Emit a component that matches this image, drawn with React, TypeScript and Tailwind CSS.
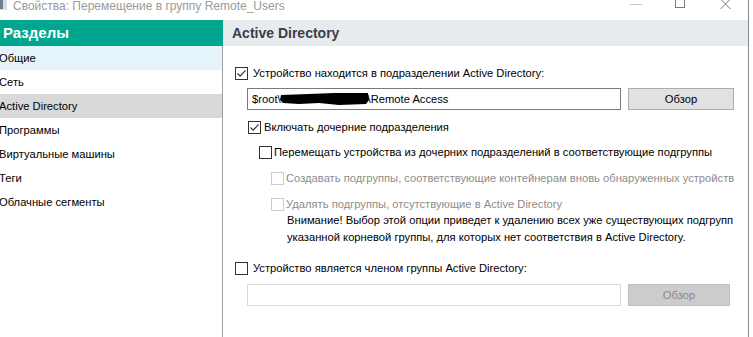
import React from "react";

function Check({ checked, disabled }: { checked?: boolean; disabled?: boolean }) {
  return (
    <span
      className={`flex h-[13px] w-[13px] shrink-0 items-center justify-center border bg-white ${
        disabled ? "border-[#cccccc]" : "border-[#333333]"
      }`}
    >
      {checked && (
        <svg width="11" height="11" viewBox="0 0 11 11">
          <path d="M1.5 5.5 L4.2 8.2 L9.5 2.3" fill="none" stroke="#333" strokeWidth="1.1" />
        </svg>
      )}
    </span>
  );
}

const sections = [
  { label: "Общие", bg: "bg-[#e5f3fb]" },
  { label: "Сеть", bg: "" },
  { label: "Active Directory", bg: "bg-[#d9d9d9]" },
  { label: "Программы", bg: "" },
  { label: "Виртуальные машины", bg: "" },
  { label: "Теги", bg: "" },
  { label: "Облачные сегменты", bg: "" },
];

export default function App() {
  return (
    <div className="h-[337px] w-[753px] overflow-hidden bg-white font-['Liberation_Sans',Arial,sans-serif] text-[11.2px] text-black">
      <div className="flex h-full w-[749px] flex-col border-r border-[#8a8a8a]">
        {/* title bar */}
        <div className="flex h-[20px] shrink-0 items-start">
          <svg width="7" height="11" viewBox="0 0 7 11" className="-mt-px">
            <rect x="0" y="0" width="7" height="11" fill="#d7dde3" />
            <rect x="0" y="1" width="3" height="9" fill="#6e7d8c" />
          </svg>
          <span className="-mt-px ml-[6px] text-[12px] leading-[14px] text-[#9a9a9a]">
            Свойства: Перемещение в группу Remote_Users
          </span>
          <div className="ml-auto flex items-start">
            <span className="mt-[4px] h-px w-[12px] bg-[#c8c8c8]" />
            <span className="-mt-px ml-[33px] h-[9px] w-[10px] border border-[#7a7a7a]" />
            <svg width="11" height="10" viewBox="0 0 11 10" className="-mt-px ml-[35px] mr-[17px]">
              <path d="M0.5 0 L10.5 10 M10.5 0 L0.5 10" stroke="#7a7a7a" strokeWidth="1" />
            </svg>
          </div>
        </div>

        {/* header */}
        <div className="flex h-[26px] shrink-0">
          <div className="flex w-[223px] items-center bg-[#00a78e] pl-[3px] text-[15px] font-bold text-white">
            Разделы
          </div>
          <div className="flex flex-1 items-center bg-[#e6ebed] pl-[9px] text-[14px] font-bold text-[#3c3d47]">
            Active Directory
          </div>
        </div>

        <div className="flex min-h-0 flex-1">
          {/* sections list */}
          <div className="w-[223px] shrink-0 border-r border-[#a0a0a0]">
            {sections.map((s) => (
              <div key={s.label} className={`flex h-[24px] items-center -ml-px ${s.bg}`}>
                {s.label}
              </div>
            ))}
          </div>

          {/* content */}
          <div className="flex flex-1 flex-col pl-[12px] pt-px">
            <label className="mt-[18px] flex h-[16px] items-center gap-[5px]">
              <Check checked />
              <span>Устройство находится в подразделении Active Directory:</span>
            </label>

            <div className="ml-[12px] mt-[7px] flex h-[22px] gap-[7px]">
              <div className="flex w-[374px] items-center border border-[#7a7a7a] pl-[4px]">
                <span>$root\</span>
                <svg width="90" height="14" viewBox="0 0 90 14" className="-ml-[2px]">
                  <path
                    d="M2 3 L30 2 L55 1 L89 1 L90 8 L87 12 L60 13 L40 11 L20 12 L4 11 L1 8 Z"
                    fill="#000"
                  />
                </svg>
                <span className="-ml-[1px]">\Remote Access</span>
              </div>
              <button className="w-[106px] border border-[#adadad] bg-[#e1e1e1]">Обзор</button>
            </div>

            <label className="ml-[13px] mt-[9px] flex h-[16px] items-center gap-[3px]">
              <Check checked />
              <span>Включать дочерние подразделения</span>
            </label>

            <label className="ml-[24px] mt-[9px] flex h-[16px] items-center gap-[2px]">
              <Check />
              <span className="whitespace-nowrap">
                Перемещать устройства из дочерних подразделений в соответствующие подгруппы
              </span>
            </label>

            <label className="ml-[36px] mt-[10px] flex h-[16px] items-center gap-[2px] text-[#8c8c8c]">
              <Check disabled />
              <span className="whitespace-nowrap">
                Создавать подгруппы, соответствующие контейнерам вновь обнаруженных устройств
              </span>
            </label>

            <label className="ml-[36px] mt-[10px] flex h-[16px] items-center gap-[2px] text-[#8c8c8c]">
              <Check disabled />
              <span>Удалять подгруппы, отсутствующие в Active Directory</span>
            </label>

            <p className="ml-[52px] whitespace-nowrap leading-[17px]">
              Внимание! Выбор этой опции приведет к удалению всех уже существующих подгрупп
              <br />
              указанной корневой группы, для которых нет соответствия в Active Directory.
            </p>

            <label className="mt-[14px] flex h-[16px] items-center gap-[5px]">
              <Check />
              <span>Устройство является членом группы Active Directory:</span>
            </label>

            <div className="ml-[12px] mt-[8px] flex h-[22px] gap-[7px]">
              <div className="w-[374px] border border-[#d9d9d9]" />
              <button className="w-[102px] border border-[#bfbfbf] bg-[#cccccc] text-[#8a8a8a]">
                Обзор
              </button>
            </div>
          </div>
        </div>
      </div>
    </div>
  );
}
